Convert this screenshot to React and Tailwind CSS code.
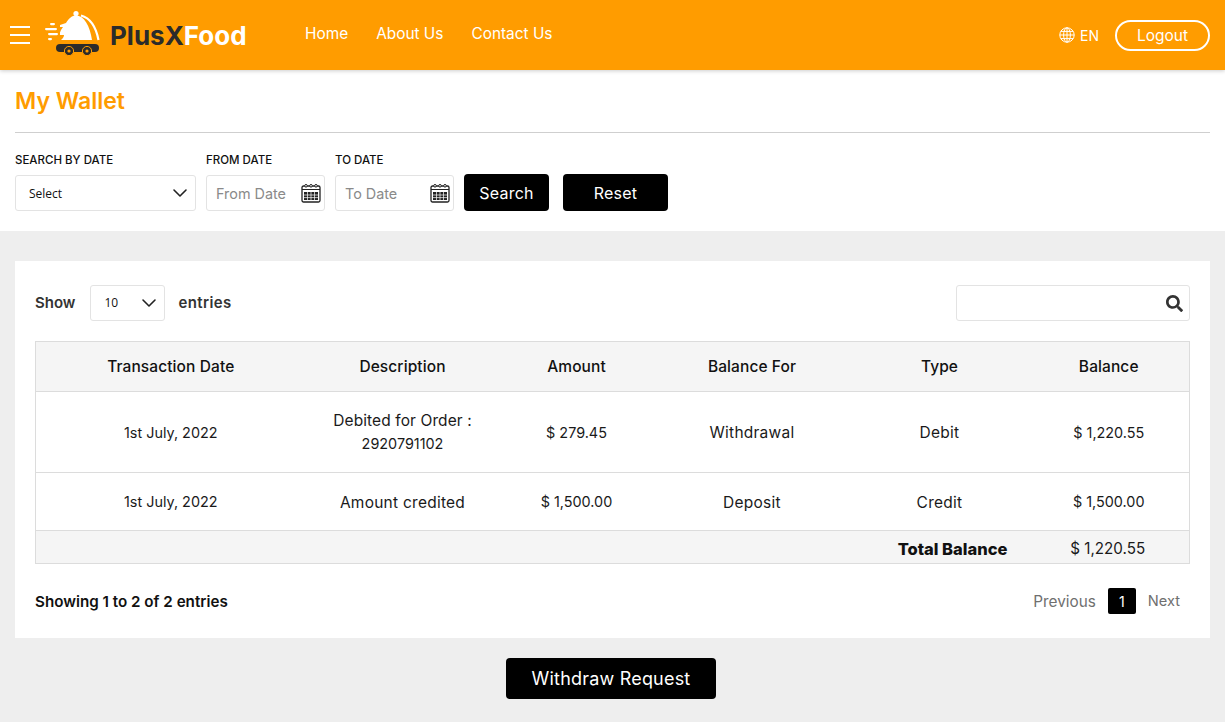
import { ChevronDown } from "lucide-react";
import { FaSearch } from "react-icons/fa";

const font = "font-['Inter','Liberation_Sans',sans-serif]";

function Logo() {
  return (
    <svg width="68" height="46" viewBox="0 0 68 46" className="shrink-0 overflow-visible">
      <circle cx="32" cy="1.5" r="2.6" fill="#fff" />
      <path d="M32 3.5 C40 3.5 46 14 48 28 L17 28 C19 26 20 25 20 23 L16 23 L16 20.5 L17 18 L19 15 L16 15 L16 13 L22 11 C25 6 28 3.5 32 3.5Z" fill="#fff" />
      <path d="M37 3.5 C46 6 52 15 54.5 28" fill="none" stroke="#fff" strokeWidth="2.2" />
      <rect x="6" y="11" width="5" height="2.2" rx="1.1" fill="#fff" />
      <rect x="1" y="16" width="12" height="2.2" rx="1.1" fill="#fff" />
      <rect x="4" y="21" width="10" height="2.2" rx="1.1" fill="#fff" />
      <rect x="4" y="26" width="4" height="2.2" rx="1.1" fill="#fff" />
      <rect x="12" y="32" width="43" height="8" rx="4" fill="#2b2b2b" />
      <circle cx="25" cy="39" r="4.6" fill="#2b2b2b" stroke="#ff9c00" strokeWidth="1" />
      <circle cx="25" cy="39" r="1.6" fill="#ff9c00" />
      <circle cx="43" cy="39" r="4.6" fill="#2b2b2b" stroke="#ff9c00" strokeWidth="1" />
      <circle cx="43" cy="39" r="1.6" fill="#ff9c00" />
    </svg>
  );
}

function GlobeIcon() {
  return (
    <svg width="16" height="16" viewBox="0 0 16 16" fill="none" stroke="#fff" strokeWidth="1" className="shrink-0">
      <circle cx="8" cy="8" r="7.2" />
      <ellipse cx="8" cy="8" rx="3.4" ry="7.2" />
      <path d="M8 .8 V15.2 M.8 8 H15.2 M1.8 4.4 H14.2 M1.8 11.6 H14.2" />
    </svg>
  );
}

function CalendarIcon() {
  return (
    <svg width="20" height="20" viewBox="0 0 20 20" className="shrink-0">
      <rect x="1" y="3" width="18" height="16" rx="1.5" fill="none" stroke="#222" strokeWidth="1.3" />
      <path d="M1 6.5 H19" stroke="#222" strokeWidth="1" />
      <circle cx="5" cy="2.8" r="1.3" fill="#fff" stroke="#222" />
      <circle cx="10" cy="2.8" r="1.3" fill="#fff" stroke="#222" />
      <circle cx="15" cy="2.8" r="1.3" fill="#fff" stroke="#222" />
      <rect x="3" y="9" width="14" height="8" fill="#222" />
      <path d="M3 12 H17 M3 14.6 H17 M6.5 9 V17 M10 9 V17 M13.5 9 V17" stroke="#fff" strokeWidth="0.7" />
    </svg>
  );
}

function DateField({ label, placeholder }) {
  return (
    <div className="flex flex-col w-[119px]">
      <label className="text-[11.5px] leading-[16px] font-medium text-[#111] mb-[7px] whitespace-nowrap">{label}</label>
      <div className="h-[36px] border border-[#e3e3e3] rounded-[3px] flex items-center justify-between pl-[9px] pr-[3px]">
        <span className="text-[14.4px] text-[#8a8a8a] whitespace-nowrap pt-[1px]">{placeholder}</span>
        <CalendarIcon />
      </div>
    </div>
  );
}

const cols = ["w-[270px]", "w-[194px]", "w-[154px]", "w-[197px]", "w-[178px]", ""];
const headers = ["Transaction Date", "Description", "Amount", "Balance For", "Type", "Balance"];
const text = "text-[15.5px] tracking-[0.25px] pt-[1px]";
const nums = "text-[14.4px]";
const rows = [
  {
    h: "h-[81px]",
    c: [
      ["1st July, 2022", nums],
      [<>
        <span className="text-[15.5px] tracking-[0.1px]">Debited for Order :</span><br /><span className={nums}>2920791102</span>
      </>, ""],
      ["$ 279.45", nums],
      ["Withdrawal", text],
      ["Debit", text],
      ["$ 1,220.55", nums],
    ],
  },
  {
    h: "h-[58px]",
    c: [
      ["1st July, 2022", nums],
      ["Amount credited", text],
      ["$ 1,500.00", nums],
      ["Deposit", text],
      ["Credit", text],
      ["$ 1,500.00", nums],
    ],
  },
];

export default function App() {
  return (
    <div className={`${font} w-[1225px] h-[722px] overflow-hidden bg-[#eeeeee] text-[#222]`}>
      <header className="h-[70px] bg-[#ff9c00] flex items-center pl-[10px] pr-[15px] text-white shadow-[0_1px_4px_rgba(0,0,0,0.2)] relative">
        <div className="flex flex-col gap-[6px] w-[20px] mr-[14px]">
          <span className="h-[2px] bg-white" />
          <span className="h-[2px] bg-white" />
          <span className="h-[2px] bg-white" />
        </div>
        <Logo />
        <div className="text-[26px] font-bold ml-[-2px] w-[195px] whitespace-nowrap">
          <span className="text-[#2b2b2b]">PlusX</span><span className="text-white">Food</span>
        </div>
        <nav className="flex gap-[28px] text-[15.4px] pb-[2px]">
          <span>Home</span>
          <span>About Us</span>
          <span>Contact Us</span>
        </nav>
        <div className="ml-auto flex items-center">
          <GlobeIcon />
          <span className="text-[14px] ml-[5px] mr-[16px]">EN</span>
          <button className="w-[95px] h-[31px] rounded-full border-2 border-white text-[15.5px] pt-[1px]">Logout</button>
        </div>
      </header>

      <section className="bg-white h-[161px] px-[15px]">
        <div className="h-[63px] border-b border-[#cfcfcf] pt-[17px]">
          <h1 className="text-[23px] leading-[28px] font-semibold text-[#ff9c00]">My Wallet</h1>
        </div>
        <div className="flex items-end pt-[19px]">
          <div className="flex flex-col w-[181px] mr-[10px]">
            <label className="text-[11.5px] leading-[16px] font-medium text-[#111] mb-[7px]">SEARCH BY DATE</label>
            <div className="h-[36px] border border-[#e3e3e3] rounded-[3px] flex items-center justify-between pl-[13px] pr-[3px]">
              <span className="text-[12px] text-[#111] font-['Open_Sans',sans-serif] pt-[1px]">Select</span>
              <ChevronDown size={24} strokeWidth={1.6} className="text-[#222]" />
            </div>
          </div>
          <div className="mr-[10px]"><DateField label="FROM DATE" placeholder="From Date" /></div>
          <div className="mr-[10px]"><DateField label="TO DATE" placeholder="To Date" /></div>
          <button className="h-[37px] w-[85px] bg-black text-white rounded-[4px] text-[16px] tracking-[0.2px] mr-[14px]">Search</button>
          <button className="h-[37px] w-[105px] bg-black text-white rounded-[4px] text-[16px] tracking-[0.2px]">Reset</button>
        </div>
      </section>

      <main className="mx-[15px] mt-[30px] bg-white h-[377px] px-[20px] pt-[24px]">
        <div className="flex items-center justify-between h-[36px]">
          <div className="flex items-center text-[15px] font-semibold text-[#333]">
            <span>Show</span>
            <div className="w-[75px] h-[36px] border border-[#e3e3e3] rounded-[3px] ml-[15px] mr-[13px] flex items-center justify-between pl-[13px] pr-[3px]">
              <span className="text-[12px] font-normal text-[#111] font-['Open_Sans',sans-serif]">10</span>
              <ChevronDown size={24} strokeWidth={1.6} className="text-[#222]" />
            </div>
            <span className="tracking-[0.4px]">entries</span>
          </div>
          <div className="w-[234px] h-[36px] border border-[#e3e3e3] rounded-[3px] flex items-center justify-end pr-[6px]">
            <FaSearch size={17} className="text-[#333]" />
          </div>
        </div>

        <table className="w-[1155px] mt-[20px] border border-[#dcdcdc] border-collapse table-fixed text-center text-[#1a1a1a]">
          <thead>
            <tr className="h-[50px] bg-[#f5f5f5] border-b border-[#dcdcdc]">
              {headers.map((h, i) => (
                <th key={h} className={`${cols[i]} font-medium text-[15.5px] tracking-[0.1px] pt-[1px] text-[#111]`}>{h}</th>
              ))}
            </tr>
          </thead>
          <tbody>
            {rows.map((r, ri) => (
              <tr key={ri} className={`${r.h} border-b border-[#dcdcdc]`}>
                {r.c.map(([c, cls], i) => (
                  <td key={i} className={`${cls} leading-[23px] px-0`}>{c}</td>
                ))}
              </tr>
            ))}
            <tr className="h-[33px] bg-[#f5f5f5]">
              <td colSpan={4} />
              <td className="font-extrabold text-[#111] text-[16.5px] pt-[5px] pl-[26px] whitespace-nowrap">Total Balance</td>
              <td className="pt-[5px] pr-[2px] text-[15.2px]">$ 1,220.55</td>
            </tr>
          </tbody>
        </table>

        <div className="flex items-center justify-between mt-[24px] h-[28px]">
          <span className="text-[15.2px] font-semibold text-[#111]">Showing 1 to 2 of 2 entries</span>
          <div className="flex items-center text-[15.3px] text-[#6f6f6f] pr-[10px]">
            <span>Previous</span>
            <span className="w-[28px] h-[26px] bg-black text-white rounded-[2px] flex items-center justify-center mx-[12px] mb-[2px] text-[14px]">1</span>
            <span className="text-[14.6px]">Next</span>
          </div>
        </div>
      </main>

      <div className="flex justify-center pt-[20px] pr-[3px]">
        <button className="w-[210px] h-[41px] bg-black text-white rounded-[4px] text-[18px] tracking-[0.2px]">Withdraw Request</button>
      </div>
    </div>
  );
}
